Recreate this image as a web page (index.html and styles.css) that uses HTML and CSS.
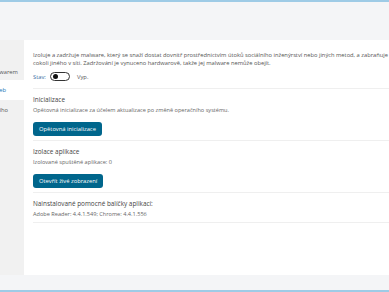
FILE: index.html
```html
<!DOCTYPE html>
<html>
    <head>
        <title>Izolace</title>
        <meta charset="utf-8">
        <link rel="stylesheet" href="styles.css">
    </head>
    <body>
        <div id="topLine"></div>
        <div id="heading"></div>
        <div id="main">
            <div id="sidebar">
                <div class="navItem navTall"><span>Ochrana před malwarem</span></div>
                <div class="navItem navActive"><span>Izolace pro web</span></div>
                <div class="navItem navThird"><span>Nastavení vnitřního</span></div>
                <div class="navRest"></div>
            </div>
            <div id="page">
                <div class="intro">
                    <p class="introText">Izoluje a zadržuje malware, který se snaží dostat dovnitř prostřednictvím útoků sociálního inženýrství nebo jiných metod, a zabraňuje mu v přístupu<br>cokoli jiného v síti. Zadržování je vynuceno hardwarově, takže jej malware nemůže obejít.</p>
                    <div class="stateRow">
                        <span class="stateLabel">Stav:</span>
                        <span class="toggle"><span class="knob"></span></span>
                        <span class="stateValue">Vyp.</span>
                    </div>
                </div>
                <div class="section">
                    <div class="sectionTitle">Inicializace</div>
                    <div class="sectionText">Opětovná inicializace za účelem aktualizace po změně operačního systému.</div>
                    <span class="button">Opětovná inicializace</span>
                </div>
                <div class="section">
                    <div class="sectionTitle">Izolace aplikace</div>
                    <div class="sectionText">Izolované spuštěné aplikace: 0</div>
                    <span class="button">Otevřít živé zobrazení</span>
                </div>
                <div class="section">
                    <div class="sectionTitle">Nainstalované pomocné balíčky aplikací:</div>
                    <div class="sectionText">Adobe Reader: 4.4.1.549; Chrome: 4.4.1.556</div>
                </div>
            </div>
        </div>
        <div id="footer"></div>
        <div id="bottomLine"></div>
    </body>
</html>
```

FILE: styles.css
```css
* {
    font-family: "Segoe UI", "Open Sans", "Noto Sans", sans-serif;
    box-sizing: border-box;
}

html, body {
    margin: 0;
    width: 389px;
    height: 292px;
    overflow: hidden;
    background: #fff;
}

body {
    display: flex;
    flex-direction: column;
}

#topLine, #bottomLine {
    height: 2px;
    background: #9ecbe6;
}

#heading {
    height: 38px;
    background: #f4f5f7;
}

#main {
    flex: 1;
    display: flex;
    min-height: 0;
}

#sidebar {
    width: 24px;
    display: flex;
    flex-direction: column;
    overflow: hidden;
    background: #f1f1f1;
}

.navItem {
    height: 20px;
    display: flex;
    align-items: center;
    justify-content: flex-end;
    white-space: nowrap;
    font-size: 5.8px;
    color: #555;
}

.navItem span {
    margin-right: 6px;
}

.navTall {
    height: 40px;
    align-items: flex-end;
    padding-bottom: 4px;
}

.navActive {
    background: #fff;
    color: #1a73b8;
}

.navActive span {
    margin-right: 18px;
}

.navThird span {
    margin-right: 16px;
}

.navRest {
    flex: 1;
}

#page {
    flex: 1;
    padding-left: 9px;
    overflow: hidden;
}

.intro {
    padding-top: 11px;
    padding-bottom: 7px;
    border-bottom: 1px solid #efefef;
}

.introText {
    margin: 0;
    width: 420px;
    white-space: nowrap;
    font-size: 5.75px;
    line-height: 8px;
    color: #555;
}

.stateRow {
    margin-top: 5px;
    height: 9px;
    display: flex;
    align-items: center;
    font-size: 5.8px;
}

.stateLabel {
    color: #3a6ea5;
    width: 17px;
}

.toggle {
    width: 20px;
    height: 9px;
    border: 1px solid #333;
    border-radius: 5px;
    display: flex;
    align-items: center;
    padding-left: 2px;
}

.knob {
    width: 5px;
    height: 5px;
    border-radius: 50%;
    background: #111;
}

.stateValue {
    margin-left: 7px;
    color: #555;
}

.section {
    padding-top: 6px;
    padding-bottom: 4px;
    border-bottom: 1px solid #efefef;
}

.sectionTitle {
    font-size: 6.4px;
    line-height: 9px;
    color: #444;
}

.sectionText {
    margin-top: 2px;
    font-size: 5.6px;
    line-height: 8px;
    color: #666;
}

.button {
    display: inline-flex;
    align-items: center;
    margin-top: 4px;
    height: 14px;
    padding: 0 6px;
    background: #00668c;
    border-radius: 3px;
    color: #fff;
    font-size: 5.8px;
}

#footer {
    height: 15px;
    background: #f4f5f7;
}
```
